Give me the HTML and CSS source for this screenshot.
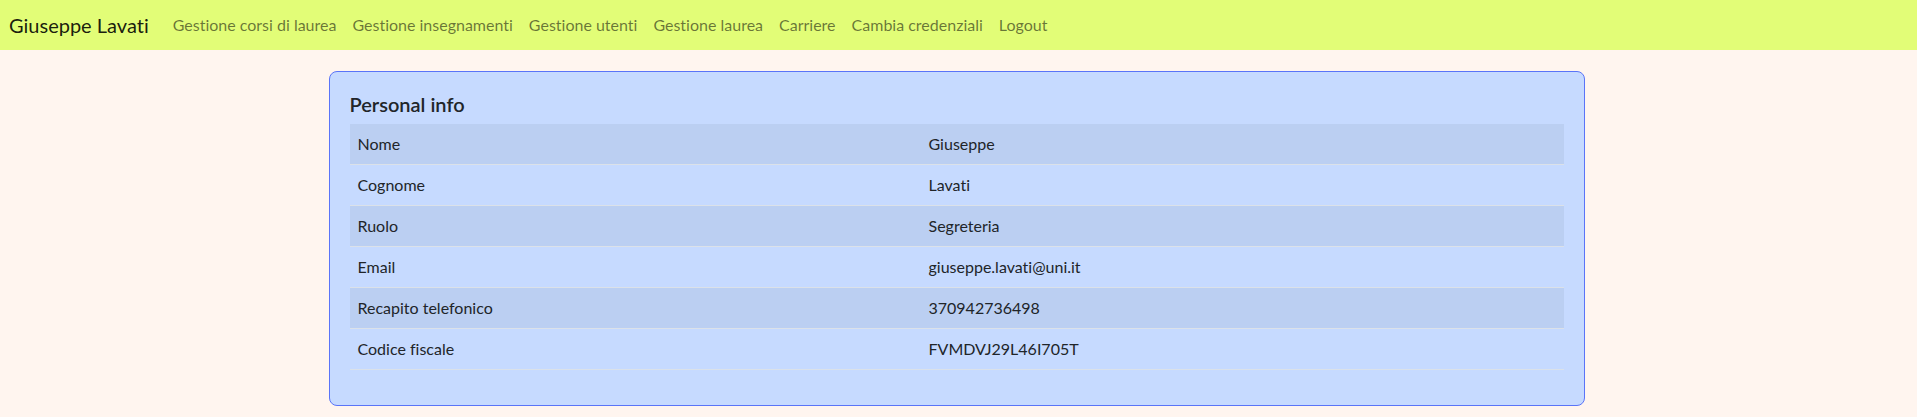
FILE: index.html
```html
<!DOCTYPE html>
<html lang="it">
<head>
<meta charset="utf-8">
<title>Personal info</title>
<link rel="stylesheet" href="styles.css">
</head>
<body>
<nav class="navbar">
  <a class="brand" href="#">Giuseppe Lavati</a>
  <ul class="nav">
    <li><a class="nav-link" href="#">Gestione corsi di laurea</a></li>
    <li><a class="nav-link" href="#">Gestione insegnamenti</a></li>
    <li><a class="nav-link" href="#">Gestione utenti</a></li>
    <li><a class="nav-link" href="#">Gestione laurea</a></li>
    <li><a class="nav-link" href="#">Carriere</a></li>
    <li><a class="nav-link" href="#">Cambia credenziali</a></li>
    <li><a class="nav-link" href="#">Logout</a></li>
  </ul>
</nav>
<main class="main">
  <section class="card">
    <h5 class="card-title">Personal info</h5>
    <table class="info">
      <colgroup><col class="col-label"><col></colgroup>
      <tbody>
        <tr><td>Nome</td><td>Giuseppe</td></tr>
        <tr><td>Cognome</td><td>Lavati</td></tr>
        <tr><td>Ruolo</td><td>Segreteria</td></tr>
        <tr><td>Email</td><td>giuseppe.lavati@uni.it</td></tr>
        <tr><td>Recapito telefonico</td><td>370942736498</td></tr>
        <tr><td>Codice fiscale</td><td>FVMDVJ29L46I705T</td></tr>
      </tbody>
    </table>
  </section>
</main>
</body>
</html>
```

FILE: styles.css
```css
* { box-sizing: border-box; }
html, body { margin: 0; padding: 0; }
body {
  background: #fff5ef;
  font-family: Lato, "Open Sans", sans-serif;
  font-variant-ligatures: none;
  font-size: 16px;
  line-height: 1.5;
  color: #212529;
}
.navbar {
  display: flex;
  align-items: center;
  height: 50px;
  padding: 0 9px;
  background: #e2fd77;
}
.brand {
  font-size: 20px;
  line-height: 30px;
  color: rgba(0,0,0,.9);
  text-decoration: none;
  margin-right: 16px;
}
.nav { display: flex; list-style: none; margin: 0; padding: 0; }
.nav-link {
  display: block;
  padding: 8px;
  color: rgba(0,0,0,.55);
  text-decoration: none;
}
.main { padding: 21px 4px 0 0; }
.card {
  width: 1256px;
  margin: 0 auto;
  background: #c6daff;
  border: 1px solid #5a74f8;
  border-radius: 8px;
  padding: 20px 20px 19px;
}
.card-title {
  margin: 0 0 8px;
  font-size: 20px;
  font-weight: 600;
  line-height: 24px;
}
.info { width: 100%; border-collapse: collapse; margin-bottom: 16px; }
.col-label { width: 571px; }
.info td {
  padding: 8px;
  border-bottom: 1px solid #dbe1e9;
}
.info tr:nth-child(odd) td { background: #bbcff2; }
```
